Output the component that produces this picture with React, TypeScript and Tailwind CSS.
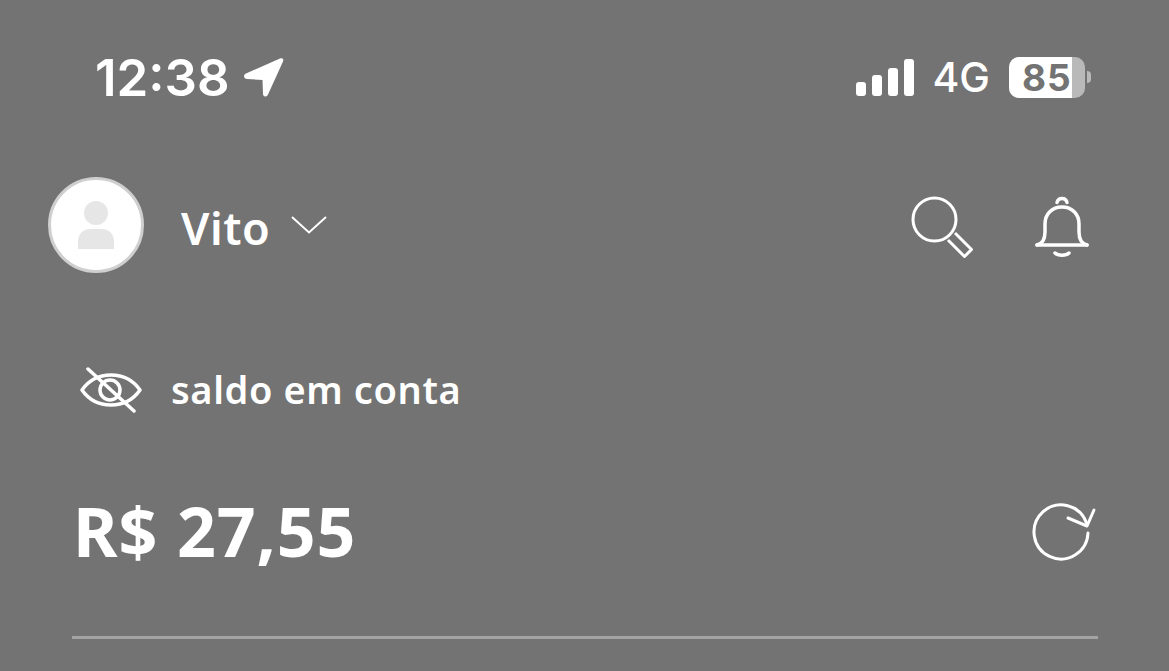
const noto = { fontFamily: '"Noto Sans", sans-serif' }

function LocationArrow() {
  return (
    <svg width="40" height="40" viewBox="0 0 40 40" fill="white">
      <path d="M36 1.500C38.500 .5 40 2 39 4.500L24 37.500C22.500 40.500 19 40 19 37L18.500 23L3 22C-.5 21.500-1 18 2 16.500Z" />
    </svg>
  )
}

function SignalBars() {
  return (
    <div className="flex items-end gap-[6px]">
      <div className="h-[14px] w-[10px] rounded-[3px] bg-white" />
      <div className="h-[21px] w-[10px] rounded-[3px] bg-white" />
      <div className="h-[28px] w-[10px] rounded-[3px] bg-white" />
      <div className="h-[37px] w-[10px] rounded-[3px] bg-white" />
    </div>
  )
}

function Battery() {
  return (
    <div className="flex items-center gap-[2px]">
      <div className="h-[41px] w-[76px] rounded-[10px] bg-[#b9b9b9]">
        <div className="flex h-full w-[63px] items-center rounded-l-[10px] bg-white pl-[13px] font-['Inter',sans-serif] text-[37px] leading-none font-bold tracking-[1px] text-[#737373]">
          85
        </div>
      </div>
      <div className="h-[12px] w-[4px] rounded-r-[4px] bg-[#b9b9b9]" />
    </div>
  )
}

function Avatar() {
  return (
    <div className="flex h-[96px] w-[96px] items-center justify-center rounded-full border-[3px] border-[#cfcfcf] bg-white">
      <svg width="38" height="48" viewBox="0 0 38 48" fill="#e6e6e6">
        <circle cx="19" cy="12" r="12" />
        <path d="M1 48V41C1 32 7 28 13 28H25C31 28 37 32 37 41V48Z" />
      </svg>
    </div>
  )
}

function Chevron() {
  return (
    <svg width="36" height="18" viewBox="0 0 36 18" fill="none" stroke="white" strokeWidth="2">
      <path d="M1 1L18 16.500L35 1" />
    </svg>
  )
}

function SearchIcon() {
  return (
    <svg width="62" height="62" viewBox="0 0 62 62" fill="none" stroke="white" strokeWidth="3" strokeLinejoin="round">
      <circle cx="23.500" cy="23.500" r="21.500" />
      <path d="M44 37L60.500 53.500L53.500 60.500L37 44" />
    </svg>
  )
}

function BellIcon() {
  return (
    <svg width="54" height="62" viewBox="0 0 54 62" fill="none" stroke="white" strokeWidth="3.500" strokeLinecap="round">
      <path d="M22 6.500C23 1 31 1 32 6.500" />
      <path d="M2 49H52" />
      <path d="M2 49C8 47.500 10 43 10 36V28C10 18 17 11 27 11S44 18 44 28V36C44 43 46 47.500 52 49" />
      <path d="M20 57C23 60 31 60 34 57" />
    </svg>
  )
}

function EyeOffIcon() {
  return (
    <svg width="62" height="48" viewBox="0 0 62 48" fill="none" stroke="white" strokeWidth="3.500" strokeLinecap="round" strokeLinejoin="round">
      <path d="M2 23C9 13 19 8 31 8S53 13 60 23C53 33 43 38 31 38S9 33 2 23Z" />
      <circle cx="30" cy="23" r="10" />
      <path d="M8 2L54 44" />
    </svg>
  )
}

function RefreshIcon() {
  return (
    <svg width="66" height="60" viewBox="0 0 66 60" fill="none" stroke="white" strokeWidth="3" strokeLinecap="round" strokeLinejoin="round">
      <path d="M55.500 22A27 27 0 1 0 57 32" />
      <path d="M37 17L56 25L63 9" />
    </svg>
  )
}

export default function App() {
  return (
    <div className="flex h-[671px] w-[1169px] flex-col overflow-hidden bg-[#737373] text-white" style={noto}>
      <div className="mt-[57px] flex h-[40px] items-center justify-between pr-[78px] pl-[95px]">
        <div className="flex items-center gap-[14px]">
          <span className="font-['Inter',sans-serif] text-[51px] leading-none font-semibold">12:38</span>
          <LocationArrow />
        </div>
        <div className="flex items-center">
          <SignalBars />
          <span className="ml-[18px] font-['Inter',sans-serif] text-[41px] leading-none font-medium">4G</span>
          <div className="ml-[19px]">
            <Battery />
          </div>
        </div>
      </div>

      <div className="mt-[80px] flex h-[96px] items-center justify-between pr-[80px] pl-[48px]">
        <div className="flex items-center">
          <Avatar />
          <span className="mt-[4px] ml-[37px] text-[45px] leading-none font-semibold tracking-[0.5px]">Vito</span>
          <div className="ml-[21px]">
            <Chevron />
          </div>
        </div>
        <div className="mt-[4px] flex items-center gap-[62px]">
          <SearchIcon />
          <BellIcon />
        </div>
      </div>

      <div className="mt-[94px] flex h-[48px] items-center gap-[29px] pl-[80px]">
        <EyeOffIcon />
        <span className="mb-[4px] text-[38px] leading-none font-semibold tracking-[0.6px]">saldo em conta</span>
      </div>

      <div className="mt-[86px] flex h-[60px] items-center justify-between pr-[72px] pl-[73px]">
        <span className="text-[68px] leading-none font-bold tracking-[0.9px]">R$ 27,55</span>
        <RefreshIcon />
      </div>

      <div className="mt-[75px] mr-[71px] ml-[72px] h-[3px] bg-[#a3a3a3]" />
    </div>
  )
}
